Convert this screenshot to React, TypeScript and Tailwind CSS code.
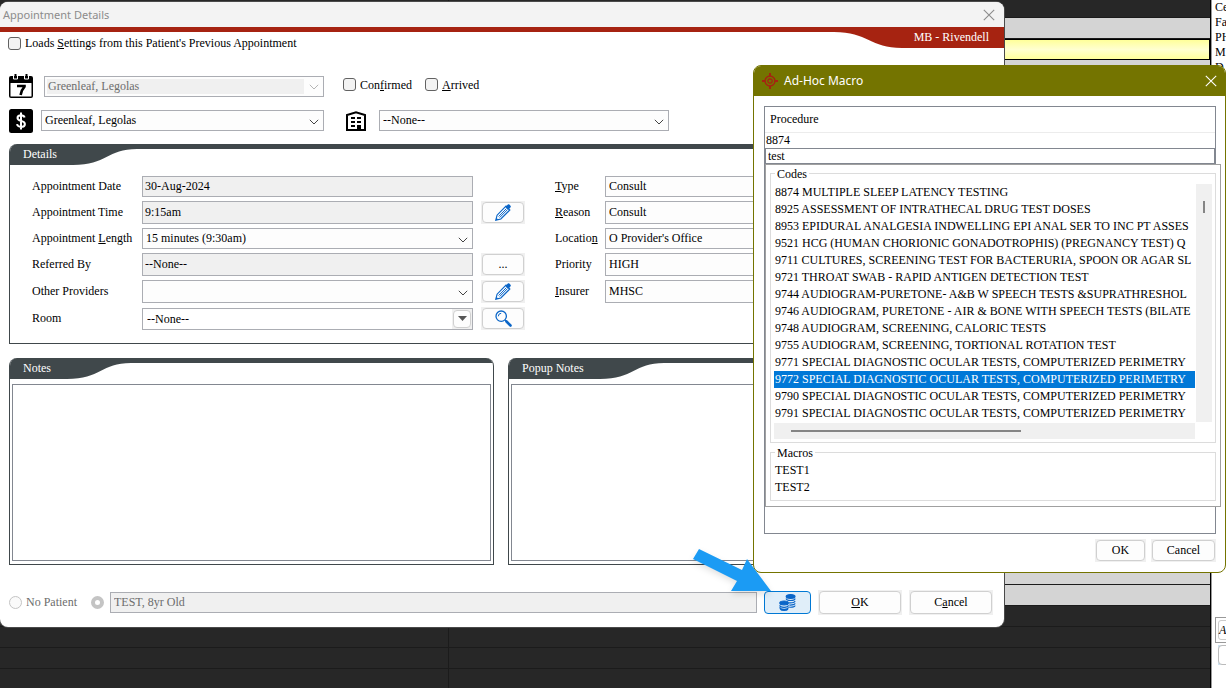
import { useState } from "react";
import type { ReactNode } from "react";
import clsx from "clsx";

type RowProps = {
  id: string;
  label: ReactNode;
  height?: string;
  labelWidth?: string;
  action?: ReactNode;
  children: ReactNode;
};

const codes = [
  "8874 MULTIPLE SLEEP LATENCY TESTING",
  "8925 ASSESSMENT OF INTRATHECAL DRUG TEST DOSES",
  "8953 EPIDURAL ANALGESIA INDWELLING EPI ANAL SER TO INC PT ASSES",
  "9521 HCG (HUMAN CHORIONIC GONADOTROPHIS) (PREGNANCY TEST) Q",
  "9711 CULTURES, SCREENING TEST FOR BACTERURIA, SPOON OR AGAR SL",
  "9721 THROAT SWAB - RAPID ANTIGEN DETECTION TEST",
  "9744 AUDIOGRAM-PURETONE- A&B W SPEECH TESTS &SUPRATHRESHOL",
  "9746 AUDIOGRAM, PURETONE - AIR & BONE WITH SPEECH TESTS (BILATE",
  "9748 AUDIOGRAM, SCREENING, CALORIC TESTS",
  "9755 AUDIOGRAM, SCREENING, TORTIONAL ROTATION TEST",
  "9771 SPECIAL DIAGNOSTIC OCULAR TESTS, COMPUTERIZED PERIMETRY",
  "9772 SPECIAL DIAGNOSTIC OCULAR TESTS, COMPUTERIZED PERIMETRY",
  "9790 SPECIAL DIAGNOSTIC OCULAR TESTS, COMPUTERIZED PERIMETRY",
  "9791 SPECIAL DIAGNOSTIC OCULAR TESTS, COMPUTERIZED PERIMETRY",
];

const macros = ["TEST1", "TEST2"];

// index of the slots that are open for booking
const FIRST_OPEN = 1;
const LAST_OPEN = 28;
const CURRENT_SLOT = 2;

const CloseIcon = ({ size = 12 }: { size?: number }) => (
  <svg width={size} height={size} viewBox="0 0 12 12" stroke="currentColor" strokeWidth="1.1" fill="none">
    <path d="M.8.8l10.4 10.4M11.2.8L.8 11.2" />
  </svg>
);

const ChevronIcon = () => (
  <svg width="10" height="6" viewBox="0 0 10 6" fill="none" stroke="currentColor" strokeWidth="1">
    <path d="M.8.8L5 5 9.200.8" />
  </svg>
);

const CalendarIcon = () => (
  <svg width="24" height="24" viewBox="0 0 24 24" className="shrink-0">
    <rect x="0" y="2" width="24" height="22" rx="2" />
    <rect x="1.500" y="9" width="21" height="13.500" rx=".5" fill="#fff" />
    <path d="M4.500 1v4h4V1M15.500 1v4h4V1" fill="none" stroke="#fff" strokeWidth="1" />
    <path d="M6.500 0v3.500M17.500 0v3.500" stroke="#000" strokeWidth="2" />
    <path d="M8 12h7.500v.6c-2 2.200-3.400 4.800-3.900 8.400" fill="none" stroke="#000" strokeWidth="2.600" />
  </svg>
);

const DollarIcon = () => (
  <svg width="24" height="24" viewBox="0 0 24 24" className="shrink-0">
    <rect width="24" height="24" rx="2.500" />
    <path
      d="M15.600 8.500c-.5-1.500-1.900-2.200-3.600-2.200-2.100 0-3.500 1-3.500 2.700 0 3.900 7.400 1.900 7.400 5.900 0 1.800-1.500 2.900-3.800 2.900-2.200 0-3.700-.9-4.100-2.700M12 3.500v17"
      fill="none"
      stroke="#fff"
      strokeWidth="2"
    />
  </svg>
);

const BuildingIcon = () => (
  <svg width="20" height="20" viewBox="0 0 20 20" className="shrink-0">
    <path d="M1 19V4L10 1.200 19 4v15z" fill="#fff" stroke="#000" strokeWidth="2" />
    <path d="M5 6h4v2H5zM11 6h4v2h-4zM5 10h4v2H5zM11 10h4v2h-4zM5 14h4v2H5zM11 14h4v5h-4z" />
  </svg>
);

const PencilIcon = () => (
  <svg width="17" height="17" viewBox="0 0 17 17">
    <path d="M.8 16.200l1.300-5L11 2.200l3.800 3.800-9 9z" fill="#fff" stroke="#0b66c8" strokeWidth="1.200" />
    <path d="M10.300 3L12.600.8c.9-.8 1.700-.4 2.500.4s1.100 1.600.3 2.400l-2.200 2.300z" fill="#0b66c8" />
    <path d="M3.600 12.500l7.800-7.900M4.700 13.500l7.800-7.900" stroke="#0b66c8" strokeWidth="1" />
    <path d="M.8 16.200l.6-2.400 1.700 1.700z" fill="#0b66c8" />
  </svg>
);

const SearchIcon = () => (
  <svg width="17" height="17" viewBox="0 0 17 17" fill="none" stroke="#0b66c8">
    <circle cx="6.200" cy="6.200" r="5.200" strokeWidth="1.300" />
    <path d="M3.300 6.300a3 3 0 0 1 2.900-3" strokeWidth="1" />
    <path d="M10 10l1.800 1.800" strokeWidth="1.400" />
    <path d="M11.500 11.500l4 4" strokeWidth="2.600" strokeLinecap="round" />
  </svg>
);

const CoinsIcon = () => (
  <svg width="17" height="17" viewBox="0 0 17 17" fill="none" stroke="#0b66c8" strokeWidth="1.200">
    <path d="M7.200 4.500c0 1.200 1.800 2 4.300 2s4.500-.8 4.500-2M10 8.800c3.500.3 6-.6 6-1.800M10.200 11c3.300.3 5.800-.6 5.800-1.800M10.200 13.200c3.300.3 5.800-.6 5.800-1.800" />
    <ellipse cx="11.600" cy="2.500" rx="4.400" ry="1.900" fill="#0b66c8" />
    <path d="M.8 11.300c0 1.200 1.900 2 4.300 2s4.300-.8 4.300-2M.8 13.300c0 1.200 1.900 2 4.300 2s4.300-.8 4.300-2M1.200 15.100c.7.900 2.100 1.300 3.900 1.300s3.200-.4 3.900-1.300" />
    <ellipse cx="5.100" cy="8.900" rx="4.300" ry="1.900" fill="#0b66c8" />
  </svg>
);

const TargetIcon = () => (
  <svg width="16" height="16" viewBox="0 0 16 16" fill="none" stroke="#a62311">
    <circle cx="8" cy="8" r="5" strokeWidth="1.400" />
    <circle cx="8" cy="8" r="2.200" strokeWidth="1.200" />
    <path d="M8 0v3.500M8 12.500V16M0 8h3.500M12.500 8H16" strokeWidth="2" />
  </svg>
);

const Checkbox = ({ children }: { children: ReactNode }) => (
  <label className="flex items-center gap-1">
    <input
      type="checkbox"
      className="size-[13px] appearance-none rounded-[3px] border border-[#626262] bg-[#f3f3f3]"
    />
    <span>{children}</span>
  </label>
);

const Button = ({ className, children, label }: { className?: string; children: ReactNode; label?: string }) => (
  <span className={clsx("flex bg-[#f0f0f0] p-px", className)}>
    <button
      type="button"
      aria-label={label}
      className="flex flex-1 items-center justify-center rounded-[4px] border border-[#d0d0d0] bg-[#fdfdfd] pb-px"
    >
      {children}
    </button>
  </span>
);

const Select = ({ id, value, label, disabled }: { id?: string; value: string; label?: string; disabled?: boolean }) => (
  <div
    className={clsx(
      "relative flex h-full flex-1 border border-[#abadb3] bg-[#fdfdfd]",
      disabled ? "p-0.5 text-[#b5b5b5]" : "text-[#444]"
    )}
  >
    <select
      id={id}
      aria-label={label}
      disabled={disabled}
      className={clsx(
        "w-full appearance-none",
        disabled ? "mr-[17px] bg-[#f0f0f0] pl-px leading-[14px] text-[#6d6d6d]" : "pb-0.5 pl-[3px] text-black"
      )}
    >
      <option>{value}</option>
    </select>
    <span className="pointer-events-none absolute inset-y-0 right-1 flex items-center pt-0.5">
      <ChevronIcon />
    </span>
  </div>
);

const ReadOnly = ({ id, value }: { id: string; value: string }) => (
  <input
    id={id}
    readOnly
    value={value}
    className="h-full min-w-0 flex-1 border border-[#abadb3] bg-[#f0f0f0] px-0.5"
  />
);

const Row = ({ id, label, height = "h-[21px]", labelWidth = "w-[110px]", action, children }: RowProps) => (
  <div className={clsx("flex items-center", height)}>
    <label htmlFor={id} className={clsx("shrink-0 pb-0.5", labelWidth)}>
      {label}
    </label>
    {children}
    {action && <div className="ml-2 flex h-[23px] w-11 shrink-0">{action}</div>}
  </div>
);

const Panel = ({ title, className, children }: { title: string; className?: string; children: ReactNode }) => (
  <section className={clsx("overflow-hidden rounded-t-lg border border-t-0 border-[#40484b] bg-white", className)}>
    <header className="flex h-[21px] border-t-[5px] border-[#40484b]">
      <h2 className="h-4 bg-[#40484b] pr-4 pl-[13px] leading-[10px] text-white">{title}</h2>
      <svg width="64" height="16" viewBox="0 0 64 16" fill="#40484b">
        <path d="M0 0H64C34 0 34 16 0 16z" />
      </svg>
    </header>
    {children}
  </section>
);

const Schedule = () => (
  <div className="flex min-w-0 flex-1 flex-col border-r border-black bg-[#272727]">
    {Array.from({ length: 32 }, (_, i) => {
      const open = i >= FIRST_OPEN && i <= LAST_OPEN;
      return (
        <div
          key={i}
          className={clsx(
            "flex shrink-0 border-b border-[#1b1b1b]",
            i === 0 ? "h-[18px]" : "h-[21px]",
            i === CURRENT_SLOT &&
              "border-t border-r border-black bg-linear-to-b from-[#ffff99] via-[#ffffd0] to-[#ffff99]",
            open && i !== CURRENT_SLOT && "bg-[#d4d4d4]"
          )}
        >
          <div className="w-[449px] border-r border-[#1b1b1b]" />
        </div>
      );
    })}
    <div className="w-[449px] flex-1 border-r border-[#1b1b1b]" />
  </div>
);

const Sidebar = () => (
  <aside className="flex w-[15px] shrink-0 flex-col justify-between overflow-hidden border-l border-[#999] bg-white pl-[3px]">
    <div className="leading-[15px] whitespace-nowrap">
      <p>Ce</p>
      <p>Fa</p>
      <p>PH</p>
      <p>M</p>
      <p>D</p>
    </div>
    <div className="flex h-[71px] w-20 flex-col gap-0.5">
      <div className="flex h-[26px] border border-[#999] p-0.5">
        <button type="button" className="flex-1 rounded-[3px] border border-[#ccc] text-left italic">
          A
        </button>
      </div>
      <div className="ml-[3px] flex h-5 bg-[#cfe4f2]">
        <button type="button" aria-label="Edit" className="flex-1 rounded-[4px] border border-[#bbb] bg-white" />
      </div>
    </div>
  </aside>
);

const AppointmentWindow = () => (
  <div className="absolute top-0.5 right-[222px] left-0 overflow-hidden rounded-[8px] bg-white shadow-[0_0_0_1px_#4a4a4a]">
    <header className="flex h-[25px] items-center justify-between bg-[#f3f3f3] pr-[9px] pl-[3px] font-['Noto_Sans',sans-serif] text-[#8c8c8c]">
      <h1 className="text-[11px]">Appointment Details</h1>
      <button type="button" aria-label="Close">
        <CloseIcon />
      </button>
    </header>

    <div className="flex items-start justify-between border-t-[5px] border-[#a62311] pl-2">
      <div className="flex h-[22px] items-center">
        <Checkbox>
          Loads <u>S</u>ettings from this Patient's Previous Appointment
        </Checkbox>
      </div>
      <div className="flex h-4">
        <svg width="68" height="16" viewBox="0 0 68 16" fill="#a62311">
          <path d="M0 0H68V16C36 16 34 0 0 0z" />
        </svg>
        <p className="bg-[#a62311] pr-[15px] pl-3 leading-[10px] text-white">MB - Rivendell</p>
      </div>
    </div>

    <div className="pt-5 pr-[11px] pb-[13px] pl-[9px]">
      <div className="flex h-6 items-center">
        <CalendarIcon />
        <div className="ml-[11px] flex h-[21px] w-[280px]">
          <Select value="Greenleaf, Legolas" label="Provider" disabled />
        </div>
        <div className="ml-[19px] flex gap-[13px] pb-[3px]">
          <Checkbox>
            Con<u>f</u>irmed
          </Checkbox>
          <Checkbox>
            <u>A</u>rrived
          </Checkbox>
        </div>
      </div>

      <div className="mt-[11px] flex h-6 items-center">
        <DollarIcon />
        <div className="mr-[22px] mb-px ml-2 flex h-[21px] w-[283px]">
          <Select value="Greenleaf, Legolas" label="Billing provider" />
        </div>
        <BuildingIcon />
        <div className="mb-px ml-[13px] flex h-[21px] w-[290px]">
          <Select value="--None--" label="Facility" />
        </div>
      </div>

      <Panel title="Details" className="mt-[11px]">
        <div className="flex gap-[30px] px-[22px] pt-[11px] pb-[13px]">
          <div className="flex w-[493px] shrink-0 flex-col gap-1">
            <div className="mr-[52px]">
              <Row id="date" label="Appointment Date">
                <ReadOnly id="date" value="30-Aug-2024" />
              </Row>
            </div>
            <Row
              id="time"
              label="Appointment Time"
              height="h-[23px]"
              action={<Button className="flex-1" label="Edit time"><PencilIcon /></Button>}
            >
              <ReadOnly id="time" value="9:15am" />
            </Row>
            <div className="mr-[52px]">
              <Row id="length" label={<>Appointment <u>L</u>ength</>}>
                <Select id="length" value="15 minutes (9:30am)" />
              </Row>
            </div>
            <Row
              id="referred"
              label="Referred By"
              height="h-[23px]"
              action={<Button className="flex-1">...</Button>}
            >
              <ReadOnly id="referred" value="--None--" />
            </Row>
            <Row
              id="others"
              label="Other Providers"
              height="h-[23px]"
              action={<Button className="flex-1" label="Edit providers"><PencilIcon /></Button>}
            >
              <Select id="others" value="" />
            </Row>
            <Row
              id="room"
              label="Room"
              height="h-[23px]"
              action={<Button className="flex-1" label="Find room"><SearchIcon /></Button>}
            >
              <div className="flex h-[22px] flex-1 border border-[#abadb3]">
                <input id="room" defaultValue="--None--" className="min-w-0 flex-1 px-1" />
                <Button className="w-5" label="Show rooms">
                  <svg width="9" height="5" viewBox="0 0 9 5" fill="#555">
                    <path d="M0 0h9L4.500 5z" />
                  </svg>
                </Button>
              </div>
            </Row>
          </div>

          <div className="flex min-w-0 flex-1 flex-col gap-1">
            <Row id="type" label={<><u>T</u>ype</>} labelWidth="w-[50px]">
              <Select id="type" value="Consult" />
            </Row>
            <Row id="reason" label={<><u>R</u>eason</>} labelWidth="w-[50px]" height="h-[23px]">
              <Select id="reason" value="Consult" />
            </Row>
            <Row id="location" label={<>Locatio<u>n</u></>} labelWidth="w-[50px]">
              <Select id="location" value="O Provider's Office" />
            </Row>
            <Row id="priority" label="Priority" labelWidth="w-[50px]" height="h-[23px]">
              <Select id="priority" value="HIGH" />
            </Row>
            <Row id="insurer" label={<><u>I</u>nsurer</>} labelWidth="w-[50px]" height="h-[23px]">
              <Select id="insurer" value="MHSC" />
            </Row>
          </div>
        </div>
      </Panel>

      <div className="mt-3.5 flex gap-3.5">
        {["Notes", "Popup Notes"].map((title) => (
          <Panel key={title} title={title} className="flex-1">
            <div className="flex px-0.5 pt-[5px] pb-[3px]">
              <textarea
                aria-label={title}
                className="h-[177px] flex-1 resize-none border border-[#828790]"
              />
            </div>
          </Panel>
        ))}
      </div>

      <div className="mt-[25px] flex h-6 items-center text-[#6d6d6d]">
        <label className="flex items-center gap-1">
          <input
            type="radio"
            name="patient"
            disabled
            className="size-[13px] appearance-none rounded-full border border-[#c4c4c4] bg-[#fafafa]"
          />
          No Patient
        </label>
        <input
          type="radio"
          name="patient"
          aria-label="Use patient"
          defaultChecked
          disabled
          className="ml-3.5 size-[13px] appearance-none rounded-full border-4 border-[#c4c4c4] bg-white"
        />
        <input
          aria-label="Patient"
          disabled
          value="TEST, 8yr Old"
          className="ml-1.5 h-[21px] min-w-0 flex-1 border border-[#abadb3] bg-[#f0f0f0] px-[3px]"
        />
        <button
          type="button"
          aria-label="Ad-hoc macro"
          className="ml-[7px] flex h-[23px] w-[47px] items-center justify-center rounded-[4px] border border-[#0078d4] bg-[#e0eef9]"
        >
          <CoinsIcon />
        </button>
        <div className="ml-[7px] flex h-[25px] gap-[7px] text-black">
          <Button className="w-[84px]">
            <span><u>O</u>K</span>
          </Button>
          <Button className="w-[84px]">
            <span>C<u>a</u>ncel</span>
          </Button>
        </div>
      </div>
    </div>
  </div>
);

const CodePicker = () => {
  const [selected, setSelected] = useState(11);

  return (
    <div className="absolute top-full left-0 z-10 w-[456px] border border-[#a0a0a0] bg-white px-1 pt-px pb-[5px]">
      <fieldset className="border border-[#dcdcdc] px-[3px] pb-[3px]">
        <legend className="ml-px px-0.5">Codes</legend>
        <div className="flex gap-px pt-0.5">
          <ul role="listbox" aria-label="Codes" className="w-[421px] overflow-hidden">
            {codes.map((code, i) => (
              <li
                key={code}
                role="option"
                aria-selected={i === selected}
                onClick={() => setSelected(i)}
                className={clsx(
                  "h-[17px] pl-px leading-[17px] whitespace-nowrap",
                  i === selected && "bg-[#0078d7] text-white"
                )}
              >
                {code}
              </li>
            ))}
          </ul>
          <div className="flex w-4 justify-center bg-[#f0f0f0] pt-[17px]">
            <div className="h-3 w-0.5 bg-[#858585]" />
          </div>
        </div>
        <div className="mt-px flex h-4 w-[421px] items-center bg-[#f0f0f0] pl-[17px]">
          <div className="h-0.5 w-[230px] bg-[#858585]" />
        </div>
      </fieldset>
      <fieldset className="mt-0.5 border border-[#dcdcdc] px-1 pb-1">
        <legend className="px-0.5">Macros</legend>
        <ul className="pt-px">
          {macros.map((macro) => (
            <li key={macro} className="h-[17px] leading-[17px]">{macro}</li>
          ))}
        </ul>
      </fieldset>
    </div>
  );
};

const MacroDialog = () => (
  <div
    role="dialog"
    aria-label="Ad-Hoc Macro"
    className="absolute top-[65px] right-0 w-[473px] rounded-[8px] border border-[#747400] bg-white"
  >
    <header className="flex h-[30px] items-center rounded-t-[7px] bg-[#747400] px-2 font-['Noto_Sans',sans-serif] text-white">
      <TargetIcon />
      <h2 className="ml-1.5 flex-1 text-[12px]">Ad-Hoc Macro</h2>
      <button type="button" aria-label="Close">
        <CloseIcon />
      </button>
    </header>

    <div className="py-2.5 pr-[9px] pl-2.5">
      <div className="h-[428px] w-[452px] border border-[#828790]">
        <table className="w-full border-collapse">
          <thead>
            <tr className="h-[25px] border-b border-[#ececec]">
              <th className="px-[5px] text-left font-normal">Procedure</th>
            </tr>
          </thead>
          <tbody>
            <tr className="h-[15px]">
              <td className="p-0 pl-px leading-[15px]">8874</td>
            </tr>
            <tr>
              <td className="p-0">
                <div className="relative flex h-4">
                  <input
                    autoFocus
                    aria-label="Procedure code"
                    defaultValue="test"
                    className="w-full border border-[#828790] px-0.5 leading-[14px] outline-none"
                  />
                  <CodePicker />
                </div>
              </td>
            </tr>
          </tbody>
        </table>
      </div>
      <div className="mt-[5px] flex h-[23px] justify-end gap-[5px]">
        <Button className="w-[51px]">OK</Button>
        <Button className="w-[65px]">Cancel</Button>
      </div>
    </div>
  </div>
);

const App = () => (
  <main className="relative flex min-h-screen overflow-hidden font-['Liberation_Serif',serif] text-[12px] leading-4 text-black">
    <Schedule />
    <Sidebar />
    <AppointmentWindow />
    <MacroDialog />
    {/* callout arrow pointing at the macro button */}
    <svg
      width="90"
      height="54"
      viewBox="0 0 90 54"
      className="pointer-events-none absolute top-[545px] right-[446px] drop-shadow-md"
    >
      <path d="M9 4L52 25L57 14L81 46H41L47 36L3 14z" fill="#1b9bf4" />
    </svg>
  </main>
);

export default App;
